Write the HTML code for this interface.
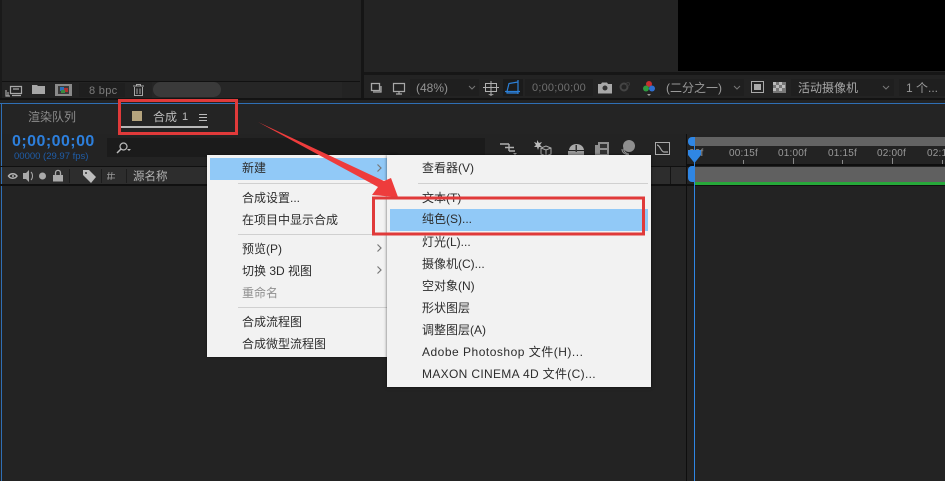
<!DOCTYPE html>
<html lang="zh"><head><meta charset="utf-8">
<style>
html,body{margin:0;padding:0;background:#232323}
#r{position:relative;width:945px;height:481px;overflow:hidden;background:#232323;font-family:"Liberation Sans","Noto Sans CJK SC",sans-serif}
.a{position:absolute}
.t{position:absolute;white-space:nowrap;line-height:16px}
.m{color:#2c2c2c;font-size:12px}
.g{color:#8c8c8c;font-size:11px}
svg{position:absolute;left:0;top:0}
</style></head><body><div id="r">
<!-- upper panels -->
<div class="a" style="left:361px;top:0;width:3px;height:98px;background:#151515"></div>
<div class="a" style="left:0;top:0;width:2px;height:98px;background:#1a1a1a"></div>
<div class="a" style="left:678px;top:0;width:267px;height:71px;background:#000"></div>
<div class="a" style="left:2px;top:81px;width:358px;height:1px;background:#111"></div>
<div class="a" style="left:152px;top:82px;width:190px;height:16px;background:#262626"></div>
<div class="a" style="left:153px;top:82px;width:68px;height:15px;border-radius:8px;background:#3a3a3a"></div>
<div class="a" style="left:79px;top:83px;width:46px;height:14px;background:#1f1f1f"></div>
<div class="t g" style="left:89px;top:83px;color:#7c7c7c;letter-spacing:.3px">8 bpc</div>
<div class="a" style="left:364px;top:72px;width:581px;height:3px;background:#161616"></div>
<div class="a" style="left:410px;top:79px;width:69px;height:17px;background:#1f1f1f"></div>
<div class="a" style="left:503px;top:79px;width:20px;height:17px;background:#1b1b1b"></div>
<div class="a" style="left:525px;top:79px;width:68px;height:17px;background:#1f1f1f"></div>
<div class="a" style="left:660px;top:79px;width:84px;height:17px;background:#1f1f1f"></div>
<div class="a" style="left:791px;top:79px;width:103px;height:17px;background:#1f1f1f"></div>
<div class="a" style="left:899px;top:79px;width:46px;height:17px;background:#1f1f1f"></div>
<div class="t g" style="left:416px;top:80px;color:#939393;font-size:12px">(48%)</div>
<div class="t g" style="left:532px;top:80px;color:#6f6f6f;font-size:11px;letter-spacing:.2px">0;00;00;00</div>
<div class="t g" style="left:666px;top:80px;color:#9a9a9a;font-size:12px">(二分之一)</div>
<div class="t g" style="left:798px;top:80px;color:#a8a8a8;font-size:12px">活动摄像机</div>
<div class="t g" style="left:906px;top:80px;color:#999;font-size:12px">1 个...</div>
<!-- comp panel -->
<div class="a" style="left:0;top:98px;width:945px;height:2px;background:#131313"></div>
<div class="a" style="left:0;top:103px;width:945px;height:1px;background:#2f6fb5"></div>
<div class="a" style="left:1px;top:103px;width:1px;height:378px;background:#2f6fb5"></div>
<div class="a" style="left:2px;top:104px;width:943px;height:30px;background:#242424"></div>
<div class="t" style="left:28px;top:109px;font-size:12px;color:#8c8c8c">渲染队列</div>
<div class="a" style="left:132px;top:111px;width:10px;height:10px;background:#b5a47e"></div>
<div class="t" style="left:153px;top:109px;font-size:12px;color:#bdbdbd">合成</div>
<div class="t" style="left:182px;top:109px;font-size:11px;line-height:17px;color:#bdbdbd">1</div>
<div class="a" style="left:199px;top:114px;width:8px;height:1px;background:#bbb;box-shadow:0 3px 0 #bbb,0 6px 0 #bbb"></div>
<div class="a" style="left:120px;top:126px;width:88px;height:2px;background:#b8b8b8"></div>
<div class="t" style="left:12px;top:134px;font-size:16px;letter-spacing:.45px;font-weight:bold;color:#2d7fdc;font-family:'Liberation Sans',sans-serif">0;00;00;00</div>
<div class="t" style="left:14px;top:149px;font-size:9.5px;color:#1f5da8">00000 (29.97 fps)</div>
<div class="a" style="left:107px;top:138px;width:378px;height:19px;background:#1b1b1b"></div>
<div class="a" style="left:0;top:166px;width:690px;height:1px;background:#101010"></div>
<div class="a" style="left:2px;top:167px;width:685px;height:17px;background:#2d2d2d"></div>
<div class="a" style="left:0;top:184px;width:945px;height:2px;background:#101010"></div>
<div class="t" style="left:133px;top:169px;font-size:11.500px;color:#b4b4b4">源名称</div>
<!-- timeline -->
<div class="a" style="left:686px;top:134px;width:1px;height:347px;background:#0e0e0e"></div>
<div class="a" style="left:670px;top:167px;width:1px;height:17px;background:#141414"></div>
<div class="a" style="left:694px;top:137px;width:251px;height:9px;background:#636363"></div>
<div class="a" style="left:688px;top:137px;width:7px;height:9px;border-radius:4px 0 0 4px;background:#2f86e4"></div>
<div class="a" style="left:687px;top:164px;width:258px;height:2px;background:#0e0e0e"></div>
<div class="a" style="left:694px;top:167px;width:251px;height:15px;background:#606060"></div>
<div class="a" style="left:688px;top:166px;width:7px;height:16px;border-radius:4px 0 0 4px;background:#2f86e4"></div>
<div class="a" style="left:694px;top:182px;width:251px;height:3px;background:#27a83a"></div>
<div class="a" style="left:694px;top:146px;width:1px;height:335px;background:#2f86e4"></div>
<div class="t" style="left:689px;top:146px;font-size:10px;color:#999;letter-spacing:.2px">00f</div>
<div class="t" style="left:729px;top:146px;font-size:10px;color:#999;letter-spacing:.2px">00:15f</div>
<div class="t" style="left:778px;top:146px;font-size:10px;color:#999;letter-spacing:.2px">01:00f</div>
<div class="t" style="left:828px;top:146px;font-size:10px;color:#999;letter-spacing:.2px">01:15f</div>
<div class="t" style="left:877px;top:146px;font-size:10px;color:#999;letter-spacing:.2px">02:00f</div>
<div class="t" style="left:927px;top:146px;font-size:10px;color:#999;letter-spacing:.2px">02:15f</div>
<!-- icons -->
<svg width="945" height="481" viewBox="0 0 945 481" fill="none">
 <!-- project bar -->
 <path d="M10.500 86.500h11v7h-11zM13 89h6M6 90v6h4M8 92v4M12 95.500h9" stroke="#a8a8a8" stroke-width="1.200"/>
 <path d="M32 85h5l1 1h7v8h-13z" fill="#a6a6a6"/>
 <rect x="55" y="84" width="17" height="12" fill="#8a8a8a"/><rect x="58" y="86" width="11" height="8" fill="#3a3a3a"/><rect x="60" y="87" width="4" height="4" fill="#2d6fb8"/><rect x="64" y="88" width="4" height="4" fill="#b03030"/><rect x="61" y="90" width="4" height="3" fill="#3a8a40"/>
 <path d="M133 86h11M134.500 87v8.500h8v-8.500M137 88.500v5.500M140 88.500v5.500M136.500 86v-1.500h4v1.500" stroke="#a6a6a6"/>
 <!-- viewer bar -->
 <path d="M371.500 83.500h8v7h-8zM381 86v6h-8" stroke="#a8a8a8" stroke-width="1.300"/>
 <path d="M393.500 83.500h11v8h-11zM396 94h6M399 91v3" stroke="#a8a8a8" stroke-width="1.200"/>
 <path d="M469 86l3 3 3-3" stroke="#777"/>
 <path d="M485.500 83.500h11v8h-11zM491 81v13M483 87.500h16" stroke="#b0b0b0"/>
 <path d="M488 94h6l-3 2z" fill="#999"/>
 <path d="M507 91.500l2-8 9-1.500v11h-11zM505 91.500h15M518 80v14" stroke="#2c80d8" stroke-width="1.200"/>
 <path d="M598 84h3l1-1.500h5l1 1.500h4v9.500h-14z" fill="#a8a8a8"/><circle cx="605" cy="88" r="2.500" fill="#333"/>
 <circle cx="624" cy="87" r="3.500" stroke="#444" stroke-width="2"/><circle cx="628" cy="84" r="1.500" stroke="#3a3a3a"/>
 <circle cx="649" cy="84" r="3" fill="#c62f2f"/><circle cx="646" cy="88.500" r="3" fill="#2f9a40"/><circle cx="652" cy="88.500" r="3" fill="#2f6fd0"/>
 <path d="M647 94h4l-2 2z" fill="#999"/>
 <path d="M734 86l3 3 3-3M883 86l3 3 3-3" stroke="#777"/>
 <rect x="751.500" y="81.500" width="12" height="11" stroke="#aaa"/><rect x="754" y="84" width="7" height="6" fill="#aaa"/>
 <rect x="773" y="82" width="13" height="11" fill="#777"/><path d="M773 82h3v3h-3zM779 82h3v3h-3zM776 85h3v3h-3zM782 85h3v3h-3zM773 88h3v3h-3zM779 88h3v3h-3z" fill="#bbb"/>
 <!-- search -->
 <circle cx="123.500" cy="146.500" r="3.500" stroke="#bbb" stroke-width="1.200"/><path d="M121 149l-4 4" stroke="#bbb" stroke-width="1.500"/><path d="M127 149h4l-2 2z" fill="#bbb"/>
 <!-- timeline tools -->
 <path d="M500 144h9M509 144v7M505 147.500h9M509 151h6" stroke="#b0b0b0" stroke-width="1.400"/><path d="M513 153h4l-2 2z" fill="#999"/>
 <path d="M537 140l2 3 3-1-2 3 2 2-3 0-1 3-1-3-3 0 2-2-2-3 3 1z" fill="#bbb"/><path d="M541 148l5-2 5 2v6l-5 2-5-2zM541 148l5 2 5-2M546 150v6" stroke="#aaa"/>
 <path d="M569 150c1-8 14-8 15 0z" fill="#aaa"/><rect x="568" y="151" width="16" height="4" fill="#999"/><rect x="575.500" y="145" width="1.500" height="7" fill="#333"/>
 <rect x="595" y="145" width="3" height="10" fill="#8f8f8f"/><rect x="598" y="142" width="11" height="13" fill="#8f8f8f"/><rect x="600" y="144" width="7" height="4" fill="#333"/><rect x="600" y="150" width="7" height="4" fill="#333"/>
 <circle cx="629" cy="146" r="6" fill="#8f8f8f"/><path d="M622 149c0 4 4 6 7 6M624 148c-1 3 2 6 5 6" stroke="#999"/>
 <rect x="655.500" y="142.500" width="14" height="12" stroke="#aaa"/><path d="M657 145c3 0 4 7 7 7h4" stroke="#aaa" stroke-width="1.200"/>
 <!-- layer header -->
 <path d="M8.500 176c2-3 6.500-3 8.500 0c-2 3-6.500 3-8.500 0z" stroke="#b4b4b4" stroke-width="1.500"/><circle cx="13" cy="176" r="1" fill="#b4b4b4"/>
 <path d="M23 173h3l3-3v12l-3-3h-3z" fill="#aaa"/><path d="M31 172c2 2 2 6 0 8" stroke="#aaa"/>
 <circle cx="42.500" cy="176" r="3.500" fill="#aaa"/>
 <path d="M53 175h10v6.500h-10z" fill="#aaa"/><path d="M55.500 175v-2c0-3.500 5-3.500 5 0v2" stroke="#aaa" stroke-width="1.300"/>
 <path d="M83 170h6l7 7-5 6-8-8z" fill="#bdbdbd"/><circle cx="86" cy="173" r="1" fill="#333"/>
 <path d="M107 174.500h8M107 178h8M112 172l-1 8M109 172l-1 8" stroke="#999" stroke-width=".8"/>
 <path d="M69.500 169v14M101.500 169v14M126.500 169v14" stroke="#1d1d1d"/>
 <!-- playhead -->
 <path d="M688 150h13v5l-6.500 8-6.500-8z" fill="#2f86e4"/>
 <path d="M743.500 160v4M793.500 158v6M842.500 160v4M892.500 158v6M942.500 160v4" stroke="#888"/>
</svg>
<!-- menu 1 -->
<div class="a" style="left:207px;top:155px;width:190px;height:202px;background:#f2f2f2;box-shadow:0 0 2px rgba(0,0,0,.5)"></div>
<div class="a" style="left:210px;top:158px;width:177px;height:22px;background:#91c9f7"></div>
<div class="a" style="left:238px;top:183px;width:149px;height:1px;background:#d0d0d0"></div>
<div class="a" style="left:238px;top:234px;width:149px;height:1px;background:#d0d0d0"></div>
<div class="a" style="left:238px;top:307px;width:149px;height:1px;background:#d0d0d0"></div>
<div class="t m" style="left:242px;top:160px">新建</div>
<div class="t m" style="left:242px;top:190px">合成设置...</div>
<div class="t m" style="left:242px;top:212px">在项目中显示合成</div>
<div class="t m" style="left:242px;top:241px">预览(P)</div>
<div class="t m" style="left:242px;top:263px">切换 3D 视图</div>
<div class="t m" style="left:242px;top:285px;color:#8f8f8f">重命名</div>
<div class="t m" style="left:242px;top:314px">合成流程图</div>
<div class="t m" style="left:242px;top:336px">合成微型流程图</div>
<!-- submenu -->
<div class="a" style="left:387px;top:155px;width:264px;height:232px;background:#f2f2f2;box-shadow:0 0 3px rgba(0,0,0,.6)"></div>
<div class="a" style="left:390px;top:209px;width:258px;height:22px;background:#91c9f7"></div>
<div class="a" style="left:418px;top:183px;width:230px;height:1px;background:#d0d0d0"></div>
<div class="t m" style="left:422px;top:160px">查看器(V)</div>
<div class="t m" style="left:422px;top:190px">文本(T)</div>
<div class="t m" style="left:422px;top:211px">纯色(S)...</div>
<div class="t m" style="left:422px;top:234px">灯光(L)...</div>
<div class="t m" style="left:422px;top:256px">摄像机(C)...</div>
<div class="t m" style="left:422px;top:278px">空对象(N)</div>
<div class="t m" style="left:422px;top:300px">形状图层</div>
<div class="t m" style="left:422px;top:322px">调整图层(A)</div>
<div class="t m" style="left:422px;top:344px;letter-spacing:.5px">Adobe Photoshop 文件(H)...</div>
<div class="t m" style="left:422px;top:366px;letter-spacing:.33px">MAXON CINEMA 4D 文件(C)...</div>
<!-- annotations -->
<svg width="945" height="481" viewBox="0 0 945 481" fill="none">
 <path d="M377.500 164.500l3.500 3.500-3.500 3.500M377.500 244.500l3.500 3.500-3.500 3.500M377.500 266.500l3.500 3.500-3.500 3.500" stroke="#777" stroke-width="1.200"/>
 <path d="M258 122L384 181L391 178L398 197L372 195L378 187Z" fill="#ee3c3c"/>
 <rect x="119.500" y="100.500" width="117" height="33" stroke="#e03a3a" stroke-width="3"/>
 <rect x="373.500" y="198" width="270" height="36" stroke="#e03a3a" stroke-width="3"/>
</svg>
</div></body></html>
